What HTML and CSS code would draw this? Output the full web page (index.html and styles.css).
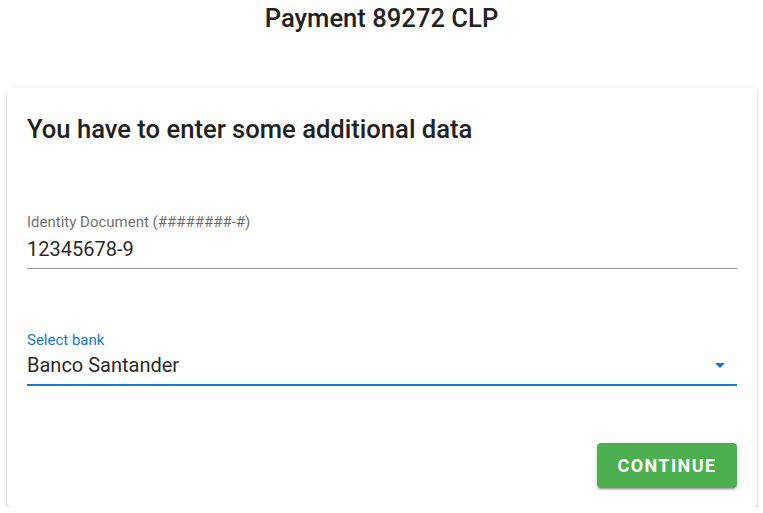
FILE: index.html
```html
<!DOCTYPE html>
<html>
<head>
<meta charset="utf-8">
<link rel="stylesheet" href="styles.css">
</head>
<body>
<h1 class="page-title">Payment 89272 CLP</h1>
<div class="card">
  <h2 class="card-title">You have to enter some additional data</h2>
  <div class="field">
    <label class="field-label">Identity Document (########-#)</label>
    <div class="field-input">12345678-9</div>
  </div>
  <div class="field field-focused">
    <label class="field-label">Select bank</label>
    <div class="field-input select">
      <span>Banco Santander</span>
      <svg class="caret" width="24" height="24" viewBox="0 0 24 24"><path d="M7 10l5 5 5-5z" fill="#1976d2"/></svg>
    </div>
  </div>
  <div class="actions">
    <button class="btn">CONTINUE</button>
  </div>
</div>
</body>
</html>
```
FILE: styles.css
```css
html, body {
  margin: 0;
  padding: 0;
  background: #fff;
  font-family: Roboto, "Noto Sans", sans-serif;
  color: rgba(0,0,0,0.87);
}
.page-title {
  margin: 0;
  height: 88px;
  padding-top: 3px;
  box-sizing: border-box;
  text-align: center;
  font-size: 25.6px;
  font-weight: 500;
  line-height: 30px;
  color: #212121;
}
.card {
  margin: 0 6px 0 7px;
  height: 419px;
  box-sizing: border-box;
  padding: 26px 20px 0 20px;
  border-radius: 4px;
  background: #fff;
  box-shadow: 0 3px 1px -2px rgba(0,0,0,.2), 0 2px 2px 0 rgba(0,0,0,.14), 0 1px 5px 0 rgba(0,0,0,.12);
}
.card-title {
  margin: 0;
  font-size: 25.6px;
  font-weight: 500;
  line-height: 30px;
  color: #212121;
}
.field {
  display: flex;
  flex-direction: column;
}
.field:first-of-type { margin-top: 69px; }
.field-label {
  font-size: 15px;
  line-height: 18px;
  color: rgba(0,0,0,0.6);
}
.field-input {
  font-size: 20px;
  line-height: 26px;
  padding: 5px 0 6px;
  border-bottom: 1px solid #949494;
  color: rgba(0,0,0,0.87);
}
.field-focused { margin-top: 62px; }
.field-focused .field-label { color: #1976d2; }
.field-focused .field-input {
  border-bottom: 2px solid #1976d2;
  padding: 3px 0 6px;
}
.select {
  display: flex;
  align-items: center;
  justify-content: space-between;
}
.caret { margin-right: 5px; }
.actions {
  display: flex;
  justify-content: flex-end;
  margin-top: 57px;
}
.btn {
  width: 140px;
  height: 45px;
  border: none;
  border-radius: 4px;
  background: #4caf50;
  color: #fff;
  font-family: Roboto, sans-serif;
  font-weight: 700;
  font-size: 18px;
  letter-spacing: 1.4px;
  box-shadow: 0 3px 1px -2px rgba(0,0,0,.2), 0 2px 2px 0 rgba(0,0,0,.14), 0 1px 5px 0 rgba(0,0,0,.12);
}
```
